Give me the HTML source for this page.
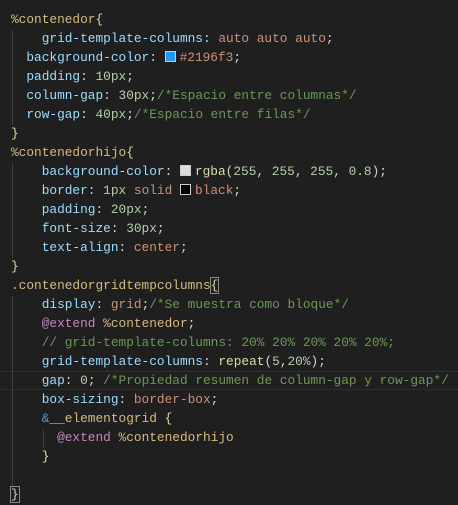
<!DOCTYPE html>
<html><head><style>
html,body{margin:0;padding:0;background:#1f1f1f;width:458px;height:505px;overflow:hidden}
pre{margin:0;position:absolute;left:11px;top:10px;font-family:"Liberation Mono",monospace;font-size:12.8px;line-height:19px;color:#d4d4d4}
.s{color:#d7ba7d}.p{color:#9cdcfe}.v{color:#ce9178}.n{color:#b5cea8}.c{color:#6a9955}.k{color:#c586c0}.f{color:#dcdcaa}.o{color:#569cd6}
.b{outline:1px solid #888;}
.sw{display:inline-block;width:9px;height:9px;border:1px solid #ccc;margin-right:4px;vertical-align:-1px}
.cur{position:absolute;left:0;top:371px;width:458px;height:19px;box-sizing:border-box;border-top:1px solid #2e2e2e;border-bottom:1px solid #2e2e2e}
.g{position:absolute;width:1px;background:#404040}
</style></head><body>
<div class="cur"></div>
<div class="g" style="left:12px;top:30px;height:95px"></div>
<div class="g" style="left:12px;top:163px;height:95px"></div>
<div class="g" style="left:12px;top:296px;height:190px"></div>
<div class="g" style="left:43px;top:429px;height:19px"></div>
<pre><span class="s">%contenedor</span><span class="f">{</span>
    <span class="p">grid-template-columns</span>: <span class="v">auto auto auto</span>;
  <span class="p">background-color</span>: <span class="sw" style="background:#2196f3"></span><span class="v">#2196f3</span>;
  <span class="p">padding</span>: <span class="n">10px</span>;
  <span class="p">column-gap</span>: <span class="n">30px</span>;<span class="c">/*Espacio entre columnas*/</span>
  <span class="p">row-gap</span>: <span class="n">40px</span>;<span class="c">/*Espacio entre filas*/</span>
<span class="f">}</span>
<span class="s">%contenedorhijo</span><span class="f">{</span>
    <span class="p">background-color</span>: <span class="sw" style="background:#ddd"></span><span class="f">rgba</span>(<span class="n">255</span>, <span class="n">255</span>, <span class="n">255</span>, <span class="n">0.8</span>);
    <span class="p">border</span>: <span class="n">1px</span> <span class="v">solid</span> <span class="sw" style="background:#000"></span><span class="v">black</span>;
    <span class="p">padding</span>: <span class="n">20px</span>;
    <span class="p">font-size</span>: <span class="n">30px</span>;
    <span class="p">text-align</span>: <span class="v">center</span>;
<span class="f">}</span>
<span class="s">.contenedorgridtempcolumns</span><span class="f b">{</span>
    <span class="p">display</span>: <span class="v">grid</span>;<span class="c">/*Se muestra como bloque*/</span>
    <span class="k">@extend</span> <span class="s">%contenedor</span>;
    <span class="c">// grid-template-columns: 20% 20% 20% 20% 20%;</span>
    <span class="p">grid-template-columns</span>: <span class="f">repeat</span>(<span class="n">5</span>,<span class="n">20%</span>);
    <span class="p">gap</span>: <span class="n">0</span>; <span class="c">/*Propiedad resumen de column-gap y row-gap*/</span>
    <span class="p">box-sizing</span>: <span class="v">border-box</span>;
    <span class="o">&amp;</span><span class="s">__elementogrid</span> <span class="f">{</span>
      <span class="k">@extend</span> <span class="s">%contenedorhijo</span>
    <span class="f">}</span>

<span class="f b">}</span></pre>
</body></html>
